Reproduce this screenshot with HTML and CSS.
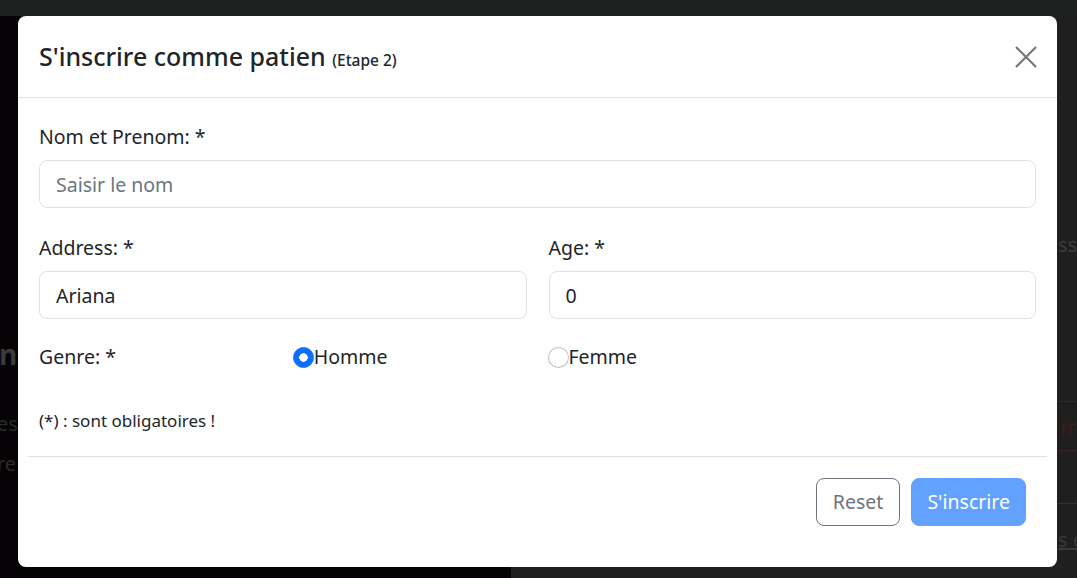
FILE: index.html
```html
<!DOCTYPE html>
<html lang="fr">
<head>
<meta charset="utf-8">
<title>S'inscrire comme patien</title>
<link rel="stylesheet" href="styles.css">
</head>
<body>
<div class="page">
  <div class="topbar"></div>
  <div class="main">
    <div class="left-panel">
      <div class="bg-title">ni</div>
      <div class="bg-text first">est</div>
      <div class="bg-text">re</div>
    </div>
    <div class="right-panel">
      <div class="bg-label">sse e-mail</div>
      <div class="bg-table">
        <div class="bg-row red">m</div>
        <div class="bg-row empty"></div>
      </div>
      <div class="bg-link">s compte</div>
    </div>
  </div>
</div>

<div class="modal">
  <div class="modal-header">
    <h3 class="modal-title">S'inscrire comme patien <small class="step">(Etape 2)</small></h3>
    <button class="btn-close" type="button" aria-label="Close">
      <svg width="22" height="22" viewBox="0 0 22 22"><path d="M1 1L21 21M21 1L1 21" stroke="#777" stroke-width="2.2" fill="none"/></svg>
    </button>
  </div>
  <div class="modal-body">
    <form class="form">
      <div class="field">
        <label class="form-label">Nom et Prenom: *</label>
        <input class="form-control" type="text" placeholder="Saisir le nom">
      </div>
      <div class="grid-2">
        <div>
          <label class="form-label">Address: *</label>
          <input class="form-control" type="text" value="Ariana">
        </div>
        <div>
          <label class="form-label">Age: *</label>
          <input class="form-control" type="text" value="0">
        </div>
      </div>
      <div class="genre-row">
        <span class="genre-label">Genre: *</span>
        <label class="radio"><input type="radio" name="genre" checked>Homme</label>
        <label class="radio"><input type="radio" name="genre">Femme</label>
      </div>
      <p class="note">(*) : sont obligatoires !</p>
    </form>
    <hr class="divider">
    <div class="footer">
      <button class="btn btn-outline" type="button">Reset</button>
      <button class="btn btn-primary" type="button">S'inscrire</button>
    </div>
  </div>
</div>
</body>
</html>
```

FILE: styles.css
```css
html, body {
  margin: 0;
  padding: 0;
}

body {
  width: 1077px;
  height: 578px;
  overflow: hidden;
  position: relative;
  font-family: "Noto Sans", "Open Sans", sans-serif;
  background: #1f1f1f;
}

.page {
  width: 1077px;
  height: 578px;
  display: flex;
  flex-direction: column;
}

.topbar {
  height: 16px;
  background: #1f2120;
  flex: none;
}

.main {
  flex: 1;
  display: flex;
}

.left-panel {
  width: 511px;
  background: #050305;
  padding-top: 320px;
  box-sizing: border-box;
  overflow: hidden;
}

.bg-title {
  font-size: 28px;
  font-weight: 700;
  line-height: 36px;
  color: #3a3a3a;
  margin-left: -1px;
}

.bg-text {
  font-size: 20px;
  line-height: 40px;
  color: #2a2a2a;
  margin-left: -3px;
}

.bg-text.first {
  margin-top: 32px;
}

.right-panel {
  flex: 1;
  background: #1f1f1f;
  padding-left: 547px;
  padding-top: 214px;
  overflow: hidden;
  white-space: nowrap;
}

.bg-label {
  font-size: 20px;
  line-height: 30px;
  color: #3c3c3c;
}

.bg-table {
  margin-top: 141px;
  margin-left: -10px;
}

.bg-row {
  height: 48px;
  border-top: 1px solid #3a2424;
  font-size: 22px;
  line-height: 48px;
  padding-left: 12px;
}

.bg-row.red {
  color: #3a1c1c;
}

.bg-row.empty {
  border-bottom: 1px solid #333;
  height: 52px;
}

.bg-link {
  margin-top: 22px;
  font-size: 20px;
  color: #3a3a3a;
  text-decoration: underline;
}

/* Modal */
.modal {
  position: absolute;
  left: 18px;
  top: 16px;
  width: 1039px;
  height: 551px;
  background: #fff;
  border-radius: 8px;
  color: #212529;
  box-sizing: border-box;
}

.modal-header {
  height: 82px;
  box-sizing: border-box;
  border-bottom: 1px solid #dee2e6;
  display: flex;
  align-items: center;
  justify-content: space-between;
  padding: 0 20px 0 21px;
}

.modal-title {
  margin: 0;
  font-size: 25px;
  font-weight: 500;
  line-height: 36px;
  padding-top: 3px;
}

.step {
  font-size: 15.5px;
  font-weight: 500;
}

.btn-close {
  border: 0;
  background: transparent;
  padding: 0;
  width: 22px;
  height: 22px;
  display: flex;
  cursor: pointer;
}

.modal-body {
  padding: 24px 10px 0;
}

.form {
  padding: 0 11px;
}

.field {
  margin-bottom: 25px;
}

.form-label {
  display: block;
  font-size: 19.5px;
  line-height: 30px;
  margin-bottom: 8px;
}

.form-control {
  display: block;
  width: 100%;
  box-sizing: border-box;
  height: 48px;
  padding: 8px 16px;
  font-family: inherit;
  font-size: 19.5px;
  line-height: 30px;
  color: #212529;
  border: 1px solid #dee2e6;
  border-radius: 8px;
  background: #fff;
  outline: none;
}

.form-control::placeholder {
  color: #6c757d;
}

.grid-2 {
  display: grid;
  grid-template-columns: 1fr 1fr;
  column-gap: 22px;
}

.genre-row {
  display: grid;
  grid-template-columns: repeat(4, 1fr);
  column-gap: 22px;
  margin-top: 23px;
  font-size: 19.5px;
  line-height: 30px;
  align-items: center;
}

.radio {
  display: flex;
  align-items: center;
  margin-left: -1px;
}

.radio input {
  appearance: none;
  -webkit-appearance: none;
  width: 21px;
  height: 21px;
  margin: 0;
  border: 1px solid rgba(0, 0, 0, 0.25);
  border-radius: 50%;
  background: #fff;
  box-sizing: border-box;
  flex: none;
}

.radio input:checked {
  border-color: #0d6efd;
  background: radial-gradient(circle, #fff 0 4px, #0d6efd 4.5px);
}

.note {
  margin: 37px 0 0;
  font-size: 17px;
  line-height: 24px;
}

.divider {
  margin: 23px 0 0;
  border: 0;
  border-top: 1px solid #dee2e6;
}

.footer {
  display: flex;
  justify-content: flex-end;
  gap: 11px;
  padding: 21px 21px 0;
}

.btn {
  font-family: inherit;
  font-size: 19.5px;
  line-height: 30px;
  padding: 8px 15px;
  height: 48px;
  box-sizing: border-box;
  border-radius: 8px;
  border: 1px solid transparent;
  cursor: pointer;
}

.btn-outline {
  background: #fff;
  border-color: #6c757d;
  color: #6c757d;
  padding: 8px 16px;
}

.btn-primary {
  background: #62a1fe;
  border-color: #62a1fe;
  color: #fff;
}
```
